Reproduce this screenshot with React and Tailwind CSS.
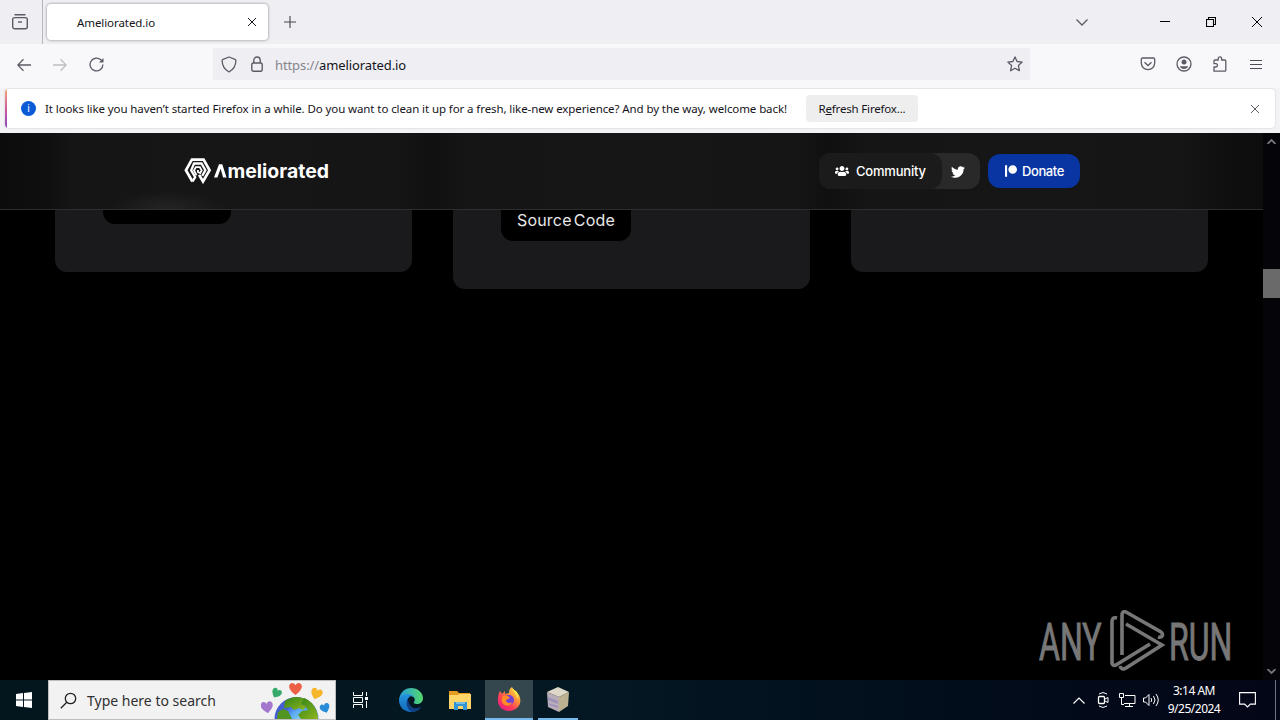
import React from "react";
import { FaTwitter, FaUsers, FaPatreon } from "react-icons/fa";

const TabBar = () => (
  <div className="flex h-11 shrink-0 items-center bg-[#eeeef3] text-[#15141a]">
    <div className="flex h-full w-[43px] items-center justify-center border-r border-[#b5b5bc] pr-[2px]">
      <svg width="18" height="18" viewBox="0 0 18 18" fill="none" stroke="#5b5b66" strokeWidth="1.4">
        <path d="M4 1.800h10" strokeLinecap="round" />
        <rect x="1.700" y="4.600" width="14.600" height="11.200" rx="2" />
        <path d="M7 9h4" />
      </svg>
    </div>
    <div className="ml-[4px] flex h-[36px] w-[221px] items-center justify-between rounded bg-white pr-3 pl-[30px] shadow-[0_0_3px_rgba(0,0,0,0.45)]">
      <span className="pt-[2px] text-[11.5px] tracking-[-0.08px]">Ameliorated.io</span>
      <svg width="8" height="8" viewBox="0 0 8 8" stroke="#15141a">
        <path d="M0 0l8 8M8 0L0 8" />
      </svg>
    </div>
    <svg className="ml-4" width="12" height="12" viewBox="0 0 12 12" stroke="#45454f" strokeWidth="1.1">
      <path d="M6 0v12M0 6h12" />
    </svg>
    <div className="ml-auto flex items-center pr-[18px]">
      <svg className="mr-[72px]" width="12" height="7" viewBox="0 0 12 7" fill="none" stroke="#5b5b66" strokeWidth="1.3">
        <path d="M.5.5L6 6l5.500-5.500" />
      </svg>
      <svg className="mr-[36px]" width="10" height="10" stroke="#000">
        <path d="M0 4.500h10" />
      </svg>
      <svg className="mr-[36px]" width="10" height="10" fill="none" stroke="#000" strokeWidth="1.1">
        <path d="M.5 2.500h7v7h-7zM2.500 2.500v-2h7v7h-2" />
      </svg>
      <svg width="10" height="10" stroke="#000">
        <path d="M0 0l10 10M10 0L0 10" />
      </svg>
    </div>
  </div>
);

const NavBar = () => (
  <div className="flex h-[44px] shrink-0 items-start bg-[#f8f8fb] pt-1">
    <div className="flex h-8 w-[213px] items-center gap-[22px] pt-[1px] pl-[17px]">
      <svg width="14" height="14" viewBox="0 0 14 14" fill="none" stroke="#5b5b66" strokeWidth="1.3">
        <path d="M14 7H1M6.500 1.300L.8 7l5.700 5.700" />
      </svg>
      <svg width="14" height="14" viewBox="0 0 14 14" fill="none" stroke="#bdbdc4" strokeWidth="1.3">
        <path d="M0 7h13M7.500 1.300L13.200 7l-5.700 5.700" />
      </svg>
      <svg width="15" height="15" viewBox="0 0 15 15" fill="none" stroke="#5b5b66" strokeWidth="1.3">
        <path d="M13.900 7.500A6.400 6.400 0 1 1 11.800 2.800L13 4" />
        <path d="M14.500 1v4.500H10z" fill="#5b5b66" stroke="none" />
      </svg>
    </div>
    <div className="flex h-8 w-[817px] items-center bg-[#eeeef3] pr-[7px] pl-2">
      <svg width="16" height="17" viewBox="0 0 16 17" fill="none" stroke="#5b5b66" strokeWidth="1.3">
        <path d="M8 1l6 2.300c.7.300.9.600.9 1.300C14.800 9.500 12.500 13.600 8 16 3.500 13.600 1.200 9.500 1.100 4.600c0-.700.2-1 .9-1.300z" strokeLinejoin="round" />
      </svg>
      <svg className="ml-[14px]" width="12" height="16" viewBox="0 0 12 16" fill="none" stroke="#5b5b66" strokeWidth="1.4">
        <rect x=".8" y="7" width="10.400" height="8.200" rx="1.500" />
        <path d="M2.800 7V4.200a3.200 3.200 0 0 1 6.400 0V7" />
      </svg>
      <span className="ml-3 pt-[3px] text-[13px] tracking-[-0.1px] text-[#15141a]">
        <span className="text-[#85858c]">https://</span>ameliorated.io
      </span>
      <svg className="ml-auto" width="16" height="16" viewBox="0 0 16 16" fill="none" stroke="#5b5b66" strokeWidth="1.300" strokeLinejoin="round">
        <path d="M8 .9l2.100 4.600 5.100.6-3.800 3.400 1 5.200L8 12.200l-4.400 2.500 1-5.200L.8 6.100l5.100-.6z" />
      </svg>
    </div>
    <div className="ml-auto flex h-8 items-center gap-[20px] pr-[18px]">
      <svg width="16" height="14" viewBox="0 0 16 14" fill="none" stroke="#5b5b66" strokeWidth="1.3">
        <path d="M2.500 1h11c.8 0 1.200.5 1.200 1.200V6A6.700 6.700 0 0 1 1.300 6V2.200C1.300 1.500 1.700 1 2.500 1z" />
        <path d="M4.500 5.200L8 8.500l3.500-3.300" />
      </svg>
      <svg width="16" height="16" viewBox="0 0 16 16" fill="none" stroke="#5b5b66" strokeWidth="1.3">
        <circle cx="8" cy="8" r="7" />
        <circle cx="8" cy="6" r="2.500" fill="#5b5b66" stroke="none" />
        <path d="M3.800 10.200h8.400C11.500 12 10 13 8 13s-3.500-1-4.200-2.800z" fill="#5b5b66" stroke="none" />
      </svg>
      <svg className="mr-[2px]" width="16" height="16" viewBox="0 0 16 16" fill="none" stroke="#5b5b66" strokeWidth="1.300" strokeLinejoin="round">
        <path d="M2 15.200V11h1.800a1.600 1.600 0 0 0 0-3.300H2V5c0-.7.300-1 1-1h3.200V2.600a1.700 1.700 0 0 1 3.400 0V4h3.200c.7 0 1 .3 1 1v9.200c0 .7-.3 1-1 1z" />
      </svg>
      <svg width="12" height="11" stroke="#4d4d58">
        <path d="M0 1.500h12M0 5.500h12M0 9.500h12" />
      </svg>
    </div>
  </div>
);

const NotificationBar = () => (
  <div className="h-[45px] shrink-0 bg-[#f3f3f6] px-[5px] pt-[1px]">
    <div className="flex h-[39px] overflow-hidden rounded bg-white shadow-[0_0_2px_rgba(0,0,0,0.2)]">
      <div className="w-[2px] bg-linear-to-b from-[#f4a76a] via-[#d05aa0] to-[#8746bb]" />
      <div className="flex flex-1 items-center pr-4 pl-[14px] text-[11.5px] text-[#15141a]">
        <div className="flex h-[15px] w-[15px] shrink-0 items-center justify-center rounded-full bg-[#0b5bd7] text-[10px] text-white">i</div>
        <span className="ml-[9px] w-[761px] shrink-0 whitespace-nowrap tracking-[-0.093px]">
          It looks like you haven’t started Firefox in a while. Do you want to clean it up for a fresh, like-new
          experience? And by the way, welcome back!
        </span>
        <button className="h-[27px] w-[112px] shrink-0 rounded bg-[#eeeeef] tracking-[-0.18px]">
          R<u>e</u>fresh Firefox...
        </button>
        <svg className="ml-auto" width="8" height="8" viewBox="0 0 8 8" stroke="#5b5b66">
          <path d="M0 0l8 8M8 0L0 8" />
        </svg>
      </div>
    </div>
  </div>
);

const Logo = () => (
  <div className="flex items-center text-white">
    <svg width="28" height="26" viewBox="0 0 28 26" fill="none" stroke="#fff" strokeWidth="2.700">
      <path d="M8.400 23.500L1.900 12.300 7.900 1.700h11.700l6 10.600L19 23.500l-3.900-6.600" />
      <path d="M8.400 23.500l2.800-4.300-4-6.900L10 5.500h7.500l3.900 6.800-3.200 5.600" strokeWidth="2.300" />
      <path d="M12.600 17.200L10 12.500l1.800-3.300h4l1.900 3.200-1.500 2.600-2.300-1V12.100" strokeWidth="1.800" />
    </svg>
    <svg className="ml-px" width="118" height="24">
      <path d="M1 18.500L6 5.300h3.300l4.200 13.200h-3.400L7.600 9.700 4.400 18.500z" fill="#fff" />
      <text x="14.500" y="18.500" textLength="101.500" lengthAdjust="spacingAndGlyphs" fill="#fff" fontSize="19" fontWeight="700" fontFamily="Inter, sans-serif">
        meliorated
      </text>
    </svg>
  </div>
);

const SiteHeader = () => (
  <header className="relative flex h-[77px] shrink-0 items-center justify-between border-b border-[#2d2d2e] bg-[linear-gradient(90deg,#0c0c0c_0px,#0f0f0f_45px,#151515_75px,#161616_220px,#151515_400px,#111111_432px,#151515_465px,#161616_630px,#151515_795px,#101010_830px,#151515_865px,#161616_1020px,#151515_1180px,#0f0f0f_1225px,#0d0d0d_1263px)] pr-[183px] pl-[184px]">
    <div className="absolute bottom-0 left-[110px] h-[18px] w-[115px] bg-[radial-gradient(ellipse_at_bottom,#242424_0%,#1b1b1b_45%,transparent_70%)]" />
    <Logo />
    <div className="flex items-center gap-2 font-[Inter] text-[13px] font-medium text-white">
      <div className="flex h-9 w-[161px] items-center rounded-xl bg-[#292929]">
        <div className="flex h-9 w-[123px] items-center rounded-xl bg-[#1b1b1b] pl-4">
          <FaUsers size={14} />
          <span className="ml-[7px] pt-px tracking-[-0.2px]">Community</span>
        </div>
        <FaTwitter className="mt-px ml-[9px]" size={14} />
      </div>
      <div className="flex h-[34px] w-[92px] items-center rounded-xl bg-[#0835a2] pl-[17px]">
        <FaPatreon size={12} />
        <span className="ml-[5px] pt-px tracking-[-0.4px]">Donate</span>
      </div>
    </div>
  </header>
);

const FeatureCards = () => (
  <div className="grid grid-cols-[357px_357px_357px] items-start gap-[41px] pl-[55px]">
    <div className="h-[62px] rounded-b-xl bg-[#1a1a1c] pl-12">
      <div className="h-[14px] w-32 rounded-b-xl bg-black" />
    </div>
    <div className="h-[79px] rounded-b-xl bg-[#1a1a1c] pl-12">
      <div className="flex h-[31px] w-[130px] items-start justify-center rounded-b-xl bg-black font-[Inter] text-[16px] leading-[21px] tracking-[0.2px] [word-spacing:-2.5px] whitespace-nowrap text-[#e8e8e8]">
        Source Code
      </div>
    </div>
    <div className="h-[62px] rounded-b-xl bg-[#1a1a1c]" />
  </div>
);

const Watermark = () => (
  <svg className="absolute right-[25px] bottom-[8px]" width="200" height="62" viewBox="0 0 200 62" fill="none" stroke="#777" strokeWidth="3.600">
    <g fill="#777" strokeWidth="1" fontFamily="Roboto, sans-serif" fontSize="51">
      <text transform="translate(1 49.500) scale(.68 1)" textLength="92" lengthAdjust="spacingAndGlyphs">ANY</text>
      <text transform="translate(131 49.500) scale(.68 1)" textLength="93" lengthAdjust="spacingAndGlyphs">RUN</text>
    </g>
    <path d="M79 8c-4-1-5 1-5 4v41c0 2 2 3 4 2l34-21" />
    <path d="M84 45V5c0-3 2-4 4-3l35 20c3 3 1 6-3 5" />
    <path d="M88 14l36 21-36 23c-3 2-5 1-6-2" />
  </svg>
);

const Scrollbar = () => (
  <div className="flex w-[17px] flex-col items-center bg-[#050509] py-[6px]">
    <svg width="9" height="5" fill="none" stroke="#77777a" strokeWidth="1.800">
      <path d="M.5 5l4-4 4 4" />
    </svg>
    <div className="mt-[125px] h-[29px] w-full bg-[#6a6a6a]" />
    <svg className="mt-auto" width="9" height="5" fill="none" stroke="#77777a" strokeWidth="1.800">
      <path d="M.5 0l4 4 4-4" />
    </svg>
  </div>
);

const SearchGlobe = () => (
  <svg width="74" height="38" viewBox="0 0 74 38">
    <defs>
      <radialGradient id="sea" cx="65%" cy="60%">
        <stop offset="0" stopColor="#9be0ff" />
        <stop offset=".65" stopColor="#58a8f4" />
        <stop offset="1" stopColor="#455fd0" />
      </radialGradient>
      <linearGradient id="land" x2="1" y2="1">
        <stop stopColor="#328319" />
        <stop offset="1" stopColor="#8eb51b" />
      </linearGradient>
      <path id="heart" d="M0 6C-5 2-7-1-5-4-3-6-1-5 0-3 1-5 3-6 5-4 7-1 5 2 0 6z" />
    </defs>
    <circle cx="35.500" cy="38" r="22" fill="url(#sea)" />
    <path d="M24 20c3-2 7-4 12-4 3 0 6 1 8 2l-3 5 4 3-3 3-4-2-5 2-3-3-7 1z" fill="url(#land)" />
    <path d="M43 17c8 3 14 11 14 21H40l-3-4 4-4 6-1-3-4-4-2z" fill="url(#land)" />
    <path d="M17 31l5-3 5 2 4 8H16z" fill="#529523" />
    <use href="#heart" transform="translate(34.500 7.500) scale(1.100)" fill="#ed6048" />
    <use href="#heart" transform="translate(55.500 12.500) rotate(18)" fill="#f6b62b" />
    <use href="#heart" transform="translate(15.500 12) rotate(28) scale(.85)" fill="#35aa6a" />
    <use href="#heart" transform="translate(6 26) rotate(-8) scale(1.050)" fill="#a477cf" />
    <use href="#heart" transform="translate(64 27) rotate(-20) scale(.85)" fill="#278dd8" />
  </svg>
);

const EdgeIcon = () => (
  <svg width="24" height="24" viewBox="0 0 24 24">
    <defs>
      <linearGradient id="edgeTop" x2="1">
        <stop stopColor="#249bdd" />
        <stop offset="1" stopColor="#55d96c" />
      </linearGradient>
      <linearGradient id="edgeBody" x2="0" y2="1">
        <stop stopColor="#2693df" />
        <stop offset="1" stopColor="#1269bb" />
      </linearGradient>
    </defs>
    <path d="M0 12C1 4 6 0 12 0c7 0 12 5 12 10 0 4-3 6-6 6-2 0-4-1-3-2 2-3 0-6-4-6-5 0-9 2-11 4z" fill="url(#edgeTop)" />
    <path d="M0 12c1-4 5-6 9-6s7 3 7 6c0-2-2-4-4-4-3 1-5 5-3 9 3 5 8 5 13 2-2 3-6 5-10 5C5 24 0 19 0 12z" fill="url(#edgeBody)" />
    <path d="M9 11c-3 4-1 10 4 13 3 0 7-2 9-5-6 3-12 1-13-8z" fill="#123e83" />
  </svg>
);

const FolderIcon = () => (
  <svg width="22" height="19" viewBox="0 0 22 19">
    <path d="M0 1c0-1 0-1 1-1h7l2 2h11v4H0z" fill="#e39b20" />
    <path d="M0 4h9l1-1h12v15H0z" fill="#ffd567" />
    <path d="M5 19v-8h13v8h-4v-4H9v4z" fill="#3293d5" />
    <path d="M7 11h9v2H7z" fill="#73bce7" />
  </svg>
);

const FirefoxIcon = () => (
  <svg width="24" height="24" viewBox="0 0 24 24">
    <defs>
      <linearGradient id="fire" x1="1" y1="0" x2=".2" y2="1">
        <stop stopColor="#fff44f" />
        <stop offset=".4" stopColor="#ff9838" />
        <stop offset=".7" stopColor="#ff3c57" />
        <stop offset="1" stopColor="#e51b83" />
      </linearGradient>
    </defs>
    <path d="M3 4l2 3 3-3v3l4-1c0-3 1-5 3-6 1 3 5 5 7 8 4 8-1 16-10 16C4 24 0 18 1 11c0-3 1-5 2-7z" fill="url(#fire)" />
    <circle cx="12" cy="13" r="5" fill="#7541d4" />
    <path d="M6 9l5 0 2 2-4 2c0 3 4 4 6 2-1 5-8 5-10 0-1-2 0-4 1-6z" fill="#ff8c24" />
    <path d="M15 1c1 4 5 5 5 11 2-3 1-6-1-8-2-1-3-2-4-3z" fill="#ffe84a" />
  </svg>
);

const BoxIcon = () => (
  <svg width="24" height="25" viewBox="0 0 24 25">
    <path d="M1 5l11-5 11 5-10 5z" fill="#ddd8c7" />
    <path d="M1 5l12 5v15L2 20z" fill="#b9adb8" />
    <path d="M23 5l-10 5v15l9-6z" fill="#bcb292" />
    <path d="M2 10l10 4v3L2 13zM3 16l9 3v2l-9-3z" fill="#9c93bd" />
  </svg>
);

const Taskbar = () => (
  <footer className="flex h-10 shrink-0 items-center bg-[linear-gradient(90deg,#03161e_0%,#041823_45%,#020d1c_75%,#030617_100%)] text-white">
    <div className="flex h-full w-12 items-center justify-center">
      <svg width="16" height="16" viewBox="0 0 16 16" fill="#fff">
        <path d="M0 2l7-1v6.500H0zM8 .9L16 0v7.500H8zM0 8.500h7V15l-7-1zM8 8.500h8V16l-8-1z" />
      </svg>
    </div>
    <div className="flex h-10 w-[288px] items-center border border-[#bdbdbd] bg-[#f2f2f2] pl-[11px] text-[#303030]">
      <svg width="17" height="17" viewBox="0 0 17 17" fill="none" stroke="#222" strokeWidth="1.300">
        <circle cx="10.500" cy="6.500" r="5.200" />
        <path d="M6.800 10.200L.8 16.200" />
      </svg>
      <span className="ml-[10px] w-[174px] text-[14px] whitespace-nowrap">Type here to search</span>
      <SearchGlobe />
    </div>
    <div className="flex h-full w-12 items-center justify-center">
      <svg width="17" height="16" viewBox="0 0 17 16" fill="none" stroke="#fff">
        <path d="M1.500 0v3.500h9V0M1.500 16v-3.500h9V16M1.500 5.500h9v5h-9zM14.500 0v4M14.500 9v7" />
        <path d="M13 5h3v3h-3z" fill="#fff" stroke="none" />
      </svg>
    </div>
    <div className="flex h-full w-[54px] items-center justify-center"><EdgeIcon /></div>
    <div className="flex h-full w-[44px] items-center justify-center"><FolderIcon /></div>
    <div className="ml-[3px] flex h-full w-12 items-center justify-center border-b-2 border-[#76b9ed] bg-[#34464e]"><FirefoxIcon /></div>
    <div className="ml-[5px] flex h-full w-10 items-center justify-center border-b-2 border-[#76b9ed]"><BoxIcon /></div>
    <div className="ml-auto flex h-full items-center">
      <svg width="12" height="7" viewBox="0 0 12 7" fill="none" stroke="#fff" strokeWidth="1.200">
        <path d="M.5 6.500L6 1l5.500 5.500" />
      </svg>
      <svg className="ml-[12px]" width="12" height="16" viewBox="0 0 12 16" fill="none" stroke="#fff">
        <rect x="1.500" y="4.500" width="6" height="7" rx="1" strokeWidth="1.300" />
        <path d="M8 7l3-1.500v5L8 9M2 2q4-3 8 0M2 14q4 3 8 0" />
      </svg>
      <svg className="ml-[10px]" width="17" height="14" viewBox="0 0 17 14" fill="none" stroke="#fff">
        <path d="M6 2.500h10v8H5M10.500 10.500v3M6 13.500h8M.5.5h4v4h-4zM2.500 4.500v7H5" />
      </svg>
      <svg className="ml-[7px]" width="17" height="14" viewBox="0 0 17 14" fill="none" stroke="#fff">
        <path d="M.5 5h2L6 1.500v11L2.500 9h-2zM8 5q1.500 2 0 4M10.500 3q3 4 0 8M13 1q4.500 6 0 12" />
      </svg>
      <div className="ml-[6px] w-[56px] text-center text-[12px] leading-[18px] tracking-[-0.5px] whitespace-nowrap">
        <div>3:14 AM</div>
        <div>9/25/2024</div>
      </div>
      <svg className="ml-[17px]" width="17" height="16" viewBox="0 0 17 16" fill="none" stroke="#fff" strokeWidth="1.100">
        <path d="M.6.600h15.800v11.500h-5L8.500 15l-2.900-2.900h-5z" />
      </svg>
      <div className="ml-[19px] h-full w-[5px] border-l border-[#6b7580]" />
    </div>
  </footer>
);

const App = () => {
  return (
    <div className="flex h-[720px] w-[1280px] flex-col overflow-hidden bg-black font-['Noto_Sans',sans-serif]">
      <TabBar />
      <NavBar />
      <NotificationBar />
      <div className="flex min-h-0 flex-1">
        <main className="relative flex-1 bg-black">
          <SiteHeader />
          <FeatureCards />
          <Watermark />
        </main>
        <Scrollbar />
      </div>
      <Taskbar />
    </div>
  );
};

export default App;
